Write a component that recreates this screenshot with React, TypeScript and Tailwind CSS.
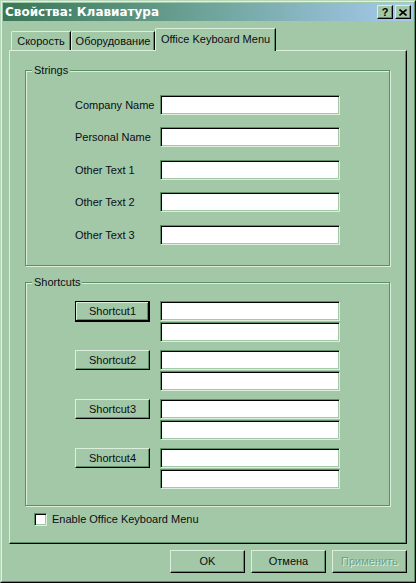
const face = 'bg-[#a3c8a7]'

function Field() {
  return (
    <div className="w-[180px] h-[20px] bg-white border border-t-[#5e8e66] border-l-[#5e8e66] border-r-[#dcefdc] border-b-[#dcefdc] shadow-[inset_1px_1px_0_#000,inset_-1px_-1px_0_#a3c8a7]" />
  )
}

function Button({ label, isDefault, disabled, className = '' }: { label: string; isDefault?: boolean; disabled?: boolean; className?: string }) {
  const bevel = isDefault
    ? 'border border-black shadow-[inset_-1px_-1px_0_#000,inset_1px_1px_0_#dcefdc,inset_-2px_-2px_0_#5e8e66]'
    : 'border border-t-[#dcefdc] border-l-[#dcefdc] border-r-black border-b-black shadow-[inset_-1px_-1px_0_#5e8e66]'
  return (
    <div className={`w-[75px] flex items-center justify-center ${face} ${bevel} ${className}`}>
      <span className={disabled ? 'text-[#74a07b] [text-shadow:1px_1px_0_#dcefdc]' : ''}>{label}</span>
    </div>
  )
}

function Group({ title, className, children }: { title: string; className: string; children: React.ReactNode }) {
  return (
    <div className={`relative border border-[#5e8e66] shadow-[inset_1px_1px_0_#dcefdc,1px_1px_0_#dcefdc] pl-[49px] ${className}`}>
      <span className={`absolute left-[6px] -top-[7px] px-[2px] leading-[13px] ${face}`}>{title}</span>
      {children}
    </div>
  )
}

const strings = [
  { label: 'Company Name', mt: '' },
  { label: 'Personal Name', mt: 'mt-[12px]' },
  { label: 'Other Text 1', mt: 'mt-[13px]' },
  { label: 'Other Text 2', mt: 'mt-[12px]' },
  { label: 'Other Text 3', mt: 'mt-[13px]' },
]

export default function App() {
  return (
    <div className={`w-[416px] h-[583px] ${face} border border-t-[#b8d6bb] border-l-[#b8d6bb] border-r-black border-b-black font-['Liberation_Sans',Arial,sans-serif] text-[11px] leading-none text-[#0c0c14] select-none`}>
      <div className="h-full border border-t-[#e2f0e3] border-l-[#e2f0e3] border-r-[#5e8e66] border-b-[#5e8e66] p-px flex flex-col">
        {/* Title bar */}
        <div className="h-[18px] flex items-center pl-[2px] bg-linear-to-r from-[#397757] via-[#6ea49a] to-[#a6caf0]">
          <span className="font-['DejaVu_Sans',Verdana,sans-serif] font-bold text-[12px] text-white">Свойства: Клавиатура</span>
          <div className="ml-auto mr-[2px] flex gap-[2px]">
            <div className={`w-[16px] h-[14px] flex items-center justify-center ${face} border border-t-[#dcefdc] border-l-[#dcefdc] border-r-black border-b-black shadow-[inset_-1px_-1px_0_#5e8e66] font-bold text-[11px] text-black`}>
              ?
            </div>
            <div className={`w-[16px] h-[14px] flex items-center justify-center ${face} border border-t-[#dcefdc] border-l-[#dcefdc] border-r-black border-b-black shadow-[inset_-1px_-1px_0_#5e8e66]`}>
              <svg width="8" height="7" viewBox="0 0 8 7">
                <path d="M0.5 0.5 L7.5 6.5 M7.5 0.5 L0.5 6.5" stroke="#000" strokeWidth="1.6" />
              </svg>
            </div>
          </div>
        </div>

        <div className="px-[6px] flex flex-col">
          {/* Tabs */}
          <div className="mt-[7px] h-[22px] flex items-end pl-[2px]">
            <div className="w-[60px] h-[19px] flex items-center justify-center border-t border-l border-r border-t-[#dcefdc] border-l-[#dcefdc] border-r-black shadow-[inset_-1px_0_0_#5e8e66] rounded-tl-[2px]">
              Скорость
            </div>
            <div className="w-[84px] h-[19px] flex items-center justify-center border-t border-l border-r border-t-[#dcefdc] border-l-[#dcefdc] border-r-black shadow-[inset_-1px_0_0_#5e8e66] rounded-tl-[2px]">
              Оборудование
            </div>
            <div className={`relative z-10 -mb-px w-[121px] h-[23px] pb-[2px] flex items-center justify-center ${face} border-t border-l border-r border-t-[#dcefdc] border-l-[#dcefdc] border-r-black shadow-[inset_-1px_0_0_#5e8e66] rounded-tl-[2px]`}>
              Office Keyboard Menu
            </div>
          </div>

          {/* Panel */}
          <div className="h-[494px] border border-t-[#dcefdc] border-l-[#dcefdc] border-r-black border-b-black shadow-[inset_-1px_-1px_0_#5e8e66] pt-[19px] pl-[15px] pr-[16px] flex flex-col">
            <Group title="Strings" className="h-[196px] pt-[24px]">
              {strings.map((s) => (
                <div key={s.label} className={`flex items-center h-[20px] ${s.mt}`}>
                  <span className="w-[85px]">{s.label}</span>
                  <Field />
                </div>
              ))}
            </Group>

            <Group title="Shortcuts" className="mt-[16px] h-[224px] pt-[18px] flex flex-col gap-[8px]">
              {[1, 2, 3, 4].map((n) => (
                <div key={n} className="flex gap-[10px]">
                  <Button label={`Shortcut${n}`} isDefault={n === 1} className={n === 1 ? 'h-[21px]' : 'h-[20px]'} />
                  <div className="flex flex-col gap-[1px]">
                    <Field />
                    <Field />
                  </div>
                </div>
              ))}
            </Group>

            <div className="mt-[7px] ml-[9px] flex items-center gap-[5px]">
              <div className="w-[13px] h-[13px] bg-white border border-t-[#5e8e66] border-l-[#5e8e66] border-r-[#dcefdc] border-b-[#dcefdc] shadow-[inset_1px_1px_0_#000,inset_-1px_-1px_0_#a3c8a7]" />
              <span>Enable Office Keyboard Menu</span>
            </div>
          </div>

          {/* Dialog buttons */}
          <div className="mt-[6px] flex justify-end gap-[6px]">
            <Button label="OK" className="h-[23px]" />
            <Button label="Отмена" className="h-[23px]" />
            <Button label="Применить" disabled className="h-[23px]" />
          </div>
        </div>
      </div>
    </div>
  )
}
